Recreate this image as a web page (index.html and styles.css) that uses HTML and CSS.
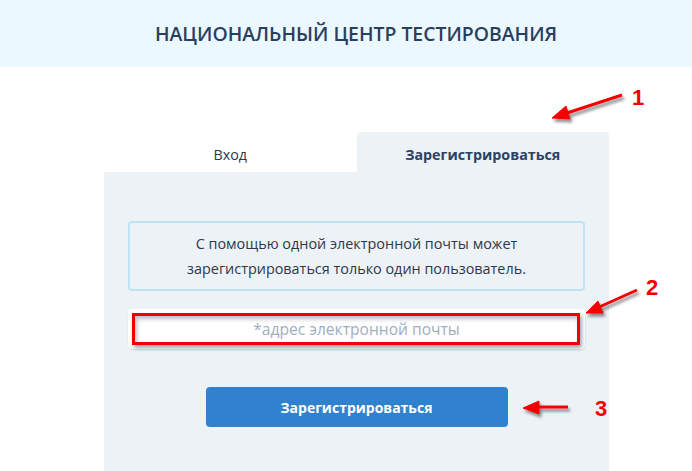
FILE: index.html
```html
<!DOCTYPE html>
<html lang="ru">
<head>
<meta charset="utf-8">
<title>Национальный центр тестирования</title>
<link rel="stylesheet" href="styles.css">
</head>
<body>
<header class="site-header">
  <h1 class="site-title">НАЦИОНАЛЬНЫЙ ЦЕНТР ТЕСТИРОВАНИЯ</h1>
</header>

<main class="page">
  <section class="auth">
    <nav class="tabs">
      <a class="tab">Вход</a>
      <a class="tab tab-active">Зарегистрироваться</a>
    </nav>
    <div class="panel">
      <p class="notice">С помощью одной электронной почты может зарегистрироваться только один пользователь.</p>
      <div class="field">
        <input class="input" type="email" placeholder="*адрес электронной почты">
        <span class="mark-box"></span>
      </div>
      <div class="actions">
        <button class="btn" type="button">Зарегистрироваться</button>
      </div>
    </div>
  </section>

  <!-- step callouts drawn over the form -->
  <svg class="callouts" width="692" height="471" viewBox="0 0 692 471">
    <defs>
      <filter id="soft" x="-20%" y="-40%" width="140%" height="180%">
        <feDropShadow dx="2" dy="3" stdDeviation="1.6" flood-color="#000" flood-opacity="0.45"/>
      </filter>
    </defs>
    <g fill="#f40000" stroke="#f40000" filter="url(#soft)">
      <line x1="622" y1="95" x2="564" y2="114" stroke-width="3"/>
      <polygon points="552,118 566,106 570,119" stroke-width="1"/>
      <line x1="637" y1="290" x2="597" y2="308" stroke-width="3"/>
      <polygon points="586,313 598,301 603,313" stroke-width="1"/>
      <line x1="568" y1="407" x2="536" y2="407" stroke-width="3"/>
      <polygon points="523,408 539,401 539,414" stroke-width="1"/>
    </g>
    <g class="callout-num">
      <text x="632" y="105">1</text>
      <text x="646" y="295">2</text>
      <text x="595" y="416">3</text>
    </g>
  </svg>
</main>
</body>
</html>
```

FILE: styles.css
```css
* { box-sizing: border-box; }

html, body {
  margin: 0;
  padding: 0;
  background: #fff;
  font-family: "Open Sans", "Noto Sans", "DejaVu Sans", sans-serif;
  color: #2d3748;
  overflow: hidden;
}

.site-header {
  height: 67px;
  padding-left: 20px;
  background: #ebf8ff;
  display: flex;
  align-items: center;
  justify-content: center;
}

.site-title {
  margin: 0;
  font-size: 19.4px;
  font-weight: 600;
  color: #2a3f5f;
}

.page {
  position: relative;
  height: 404px;
  padding-top: 65px;
}

.auth {
  width: 505px;
  margin-left: 104px;
}

.tabs {
  display: flex;
  height: 40px;
}

.tab {
  flex: 1;
  display: flex;
  align-items: center;
  justify-content: center;
  font-size: 14.3px;
  color: #2d3748;
  border-radius: 4px 4px 0 0;
  padding-top: 4px;
}

.tab-active {
  background: #edf2f7;
  font-weight: 700;
  color: #2a4365;
}

.panel {
  background: #edf2f7;
  padding: 49px 24px 60px;
  height: 300px;
}

.notice {
  margin: 0;
  padding: 8px 16px;
  border: 2px solid #bee3f8;
  border-radius: 4px;
  text-align: center;
  font-size: 14.4px;
  line-height: 25px;
  color: #2d3748;
}

.field {
  position: relative;
  margin-top: 18px;
}

.input {
  display: block;
  width: 100%;
  height: 40px;
  border: 0;
  border-radius: 4px;
  background: #fff;
  text-align: center;
  font-family: inherit;
  font-size: 15.6px;
  color: #2d3748;
  box-shadow: 0 1px 2px rgba(0, 0, 0, 0.08);
}

.input::placeholder { color: #a0aec0; }

.mark-box {
  position: absolute;
  left: 4px;
  right: 5px;
  top: 4px;
  bottom: 4px;
  border: 3px solid #f40000;
  box-shadow: 2px 3px 4px rgba(0, 0, 0, 0.35), inset 2px 3px 4px rgba(0, 0, 0, 0.25);
}

.actions {
  display: flex;
  justify-content: center;
  margin-top: 38px;
}

.btn {
  width: 302px;
  height: 40px;
  border: 0;
  border-radius: 4px;
  background: #3182ce;
  color: #fff;
  font-family: inherit;
  font-size: 14px;
  font-weight: 700;
}

.callouts {
  position: absolute;
  left: 0;
  top: -67px;
  pointer-events: none;
}

.callout-num text {
  font-family: "Liberation Sans", Arial, sans-serif;
  font-weight: 700;
  font-size: 22px;
  fill: #f40000;
}
```
